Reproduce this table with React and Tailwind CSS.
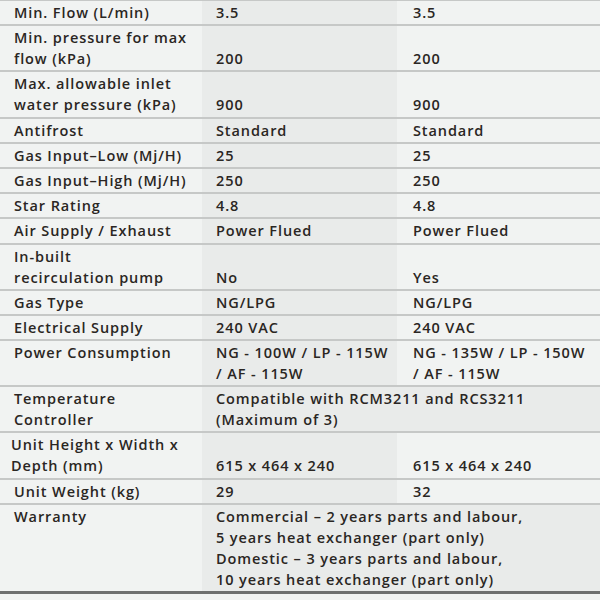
const rows = [
  { label: ["Min. Flow (L/min)"], a: ["3.5"], b: ["3.5"] },
  { label: ["Min. pressure for max", "flow (kPa)"], a: ["200"], b: ["200"] },
  { label: ["Max. allowable inlet", "water pressure (kPa)"], a: ["900"], b: ["900"] },
  { label: ["Antifrost"], a: ["Standard"], b: ["Standard"] },
  { label: ["Gas Input\u2013Low (Mj/H)"], a: ["25"], b: ["25"] },
  { label: ["Gas Input\u2013High (Mj/H)"], a: ["250"], b: ["250"] },
  { label: ["Star Rating"], a: ["4.8"], b: ["4.8"] },
  { label: ["Air Supply / Exhaust"], a: ["Power Flued"], b: ["Power Flued"] },
  { label: ["In-built", "recirculation pump"], a: ["No"], b: ["Yes"] },
  { label: ["Gas Type"], a: ["NG/LPG"], b: ["NG/LPG"] },
  { label: ["Electrical Supply"], a: ["240 VAC"], b: ["240 VAC"] },
  {
    label: ["Power Consumption"],
    a: ["NG - 100W / LP - 115W", "/ AF - 115W"],
    b: ["NG - 135W / LP - 150W", "/ AF - 115W"],
    top: true,
  },
  {
    label: ["Temperature", "Controller"],
    span: ["Compatible with RCM3211 and RCS3211", "(Maximum of 3)"],
  },
  { label: ["Unit Height x Width x", "Depth (mm)"], a: ["615 x 464 x 240"], b: ["615 x 464 x 240"], tight: true },
  { label: ["Unit Weight (kg)"], a: ["29"], b: ["32"] },
  {
    label: ["Warranty"],
    span: [
      "Commercial \u2013 2 years parts and labour,",
      "5 years heat exchanger (part only)",
      "Domestic \u2013 3 years parts and labour,",
      "10 years heat exchanger (part only)",
    ],
    top: true,
  },
];

function Lines({ lines }) {
  return (
    <div>
      {lines.map((l, i) => (
        <div key={i} className="whitespace-nowrap">
          {l}
        </div>
      ))}
    </div>
  );
}

export default function App() {
  return (
    <div
      className="w-[600px] h-[600px] bg-[#f1f3f2] text-[#2a2623] text-[14.5px] leading-[21px] font-semibold tracking-[0.9px] overflow-hidden"
      style={{ fontFamily: '"Open Sans", sans-serif' }}
    >
      <div className="border-t border-[#c6c8c7] border-b-[3px] border-b-[#6e706f]">
        {rows.map((r, i) => {
          const last = i === rows.length - 1;
          const align = r.top ? "items-start" : "items-end";
          return (
            <div
              key={i}
              className={`grid grid-cols-[202px_195px_203px] ${last ? "" : "border-b-2 border-[#c6c8c7]"}`}
            >
              <div className={`flex ${align} pt-[1px] pb-[1.2px] ${r.tight ? "pl-[11px]" : "pl-[14px]"} bg-[#f1f3f2]`}>
                <Lines lines={r.label} />
              </div>
              {r.span ? (
                <div className={`col-span-2 flex ${align} pt-[1px] pb-[1.2px] pl-[14px] bg-[#e9ebea]`}>
                  <Lines lines={r.span} />
                </div>
              ) : (
                <>
                  <div className={`flex ${align} pt-[1px] pb-[1.2px] pl-[14px] bg-[#e9ebea]`}>
                    <Lines lines={r.a} />
                  </div>
                  <div className={`flex ${align} pt-[1px] pb-[1.2px] pl-[16px] bg-[#f1f3f2]`}>
                    <Lines lines={r.b} />
                  </div>
                </>
              )}
            </div>
          );
        })}
      </div>
    </div>
  );
}
